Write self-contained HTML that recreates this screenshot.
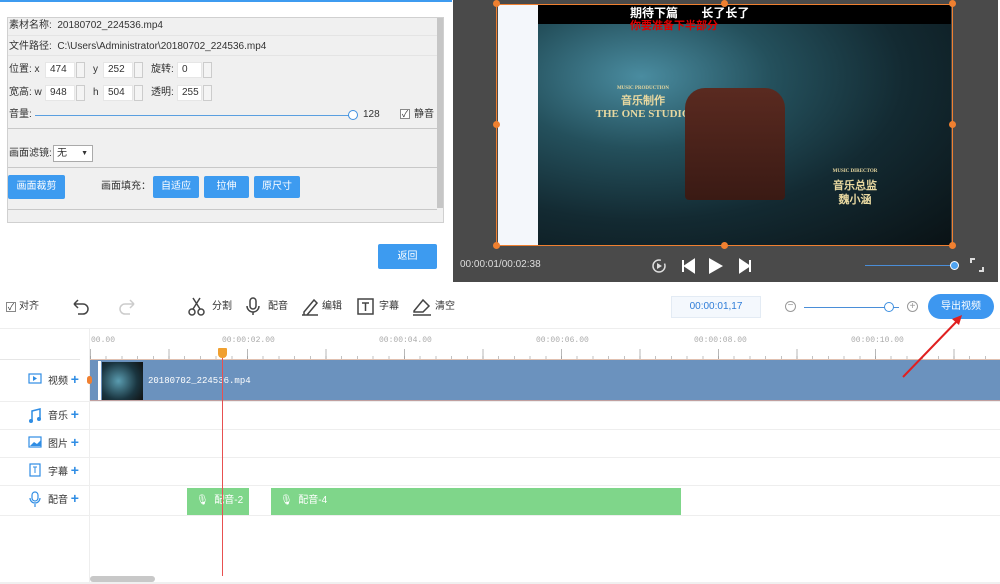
<!DOCTYPE html>
<html><head><meta charset="utf-8"><style>
*{margin:0;padding:0;box-sizing:border-box}
body{width:1000px;height:584px;position:relative;overflow:hidden;background:#fff;font-family:"Liberation Sans","Noto Sans CJK SC",sans-serif;font-size:10px;line-height:12px;color:#333}
.a{position:absolute}
.in{position:absolute;background:#fff;border:1px solid #e6e6e6;height:16px;font-size:10px;line-height:14px;padding-left:4px}
.sp{position:absolute;width:9px;height:16px;border:1px solid #ccc;background:#f4f4f4}
.btn{position:absolute;background:#3d9bf0;color:#fff;text-align:center;font-size:10px;border-radius:2px}
.lbl{position:absolute;font-size:10px;line-height:12px;color:#333}
.ruler{position:absolute;font-family:"Liberation Mono",monospace;font-size:8px;color:#aaa}
.trk{position:absolute;left:0;width:1000px;border-bottom:1px solid #eee}
.tl{position:absolute;left:48px;font-size:10px;line-height:14px;color:#333}
.plus{color:#2f8de4;font-size:14px;font-weight:bold}
</style></head><body>
<div class="a" style="left:0;top:0;width:452px;height:2px;background:#3d9bf0"></div>
<div class="a" style="left:7px;top:17px;width:437px;height:206px;background:#f0f0f0;border:1px solid #d0d0d0"></div>
<div class="a" style="left:437px;top:18px;width:6px;height:190px;background:#c6c6c6"></div>
<div class="a" style="left:8px;top:35px;width:429px;height:1px;background:#e4e4e4"></div>
<div class="a" style="left:8px;top:55px;width:429px;height:1px;background:#e4e4e4"></div>
<div class="lbl" style="left:9px;top:20px">素材名称:&nbsp; 20180702_224536.mp4</div>
<div class="lbl" style="left:9px;top:41px">文件路径:&nbsp; C:\Users\Administrator\20180702_224536.mp4</div>
<div class="lbl" style="left:9px;top:64px">位置: x</div>
<div class="in" style="left:45px;top:62px;width:30px">474</div><div class="sp" style="left:76px;top:62px"></div>
<div class="lbl" style="left:93px;top:64px">y</div>
<div class="in" style="left:103px;top:62px;width:30px">252</div><div class="sp" style="left:134px;top:62px"></div>
<div class="lbl" style="left:151px;top:64px">旋转:</div>
<div class="in" style="left:177px;top:62px;width:25px">0</div><div class="sp" style="left:203px;top:62px"></div>
<div class="lbl" style="left:9px;top:87px">宽高: w</div>
<div class="in" style="left:45px;top:85px;width:30px">948</div><div class="sp" style="left:76px;top:85px"></div>
<div class="lbl" style="left:93px;top:87px">h</div>
<div class="in" style="left:103px;top:85px;width:30px">504</div><div class="sp" style="left:134px;top:85px"></div>
<div class="lbl" style="left:151px;top:87px">透明:</div>
<div class="in" style="left:177px;top:85px;width:25px">255</div><div class="sp" style="left:203px;top:85px"></div>
<div class="lbl" style="left:9px;top:109px">音量:</div>
<div class="a" style="left:35px;top:115px;width:315px;height:1px;background:#5a9fe0"></div>
<div class="a" style="left:348px;top:110px;width:10px;height:10px;border:1.5px solid #3d8fe0;border-radius:50%;background:#fff"></div>
<div class="lbl" style="left:363px;top:109px">128</div>
<div class="a" style="left:400px;top:109px;width:10px;height:10px;border:1px solid #888;background:#fff;font-size:9px;line-height:8px;text-align:center;color:#333">✓</div>
<div class="lbl" style="left:414px;top:109px">静音</div>
<div class="a" style="left:8px;top:128px;width:429px;height:1px;background:#c8c8c8"></div>
<div class="lbl" style="left:9px;top:148px">画面滤镜:</div>
<div class="a" style="left:53px;top:145px;width:40px;height:17px;background:#fff;border:1px solid #aaa;font-size:10px;line-height:15px;padding-left:3px">无 <span style="position:absolute;right:4px;font-size:7px">▼</span></div>
<div class="a" style="left:8px;top:167px;width:429px;height:1px;background:#c8c8c8"></div>
<div class="btn" style="left:8px;top:175px;width:57px;height:24px;line-height:24px">画面裁剪</div>
<div class="lbl" style="left:101px;top:181px">画面填充：</div>
<div class="btn" style="left:153px;top:176px;width:46px;height:22px;line-height:22px">自适应</div>
<div class="btn" style="left:204px;top:176px;width:45px;height:22px;line-height:22px">拉伸</div>
<div class="btn" style="left:254px;top:176px;width:46px;height:22px;line-height:22px">原尺寸</div>
<div class="a" style="left:8px;top:209px;width:429px;height:1px;background:#c8c8c8"></div>
<div class="btn" style="left:378px;top:244px;width:59px;height:25px;line-height:25px">返回</div>
<!-- preview -->
<div class="a" style="left:453px;top:0;width:545px;height:282px;background:#4a4a4a"></div>
<div class="a" style="left:498px;top:4px;width:40px;height:242px;background:#f4f7fb"></div>
<div class="a" style="left:538px;top:4px;width:413px;height:242px;background:radial-gradient(ellipse at 25% 30%,#4a8ca0 0%,#24505c 30%,#132a32 60%,#0a1215 100%)"></div>
<div class="a" style="left:538px;top:4px;width:413px;height:20px;background:#000"></div>
<div class="a" style="left:630px;top:7px;color:#fff;font-weight:bold;font-size:12px">期待下篇 &nbsp; &nbsp; &nbsp; 长了长了</div>
<div class="a" style="left:630px;top:20px;color:#d00;font-weight:bold;font-size:11px">你要准备下半部分</div>
<div class="a" style="left:583px;top:80px;color:#e8d8a0;font-family:'Liberation Serif',serif;font-size:11px;font-weight:bold;text-align:center;width:120px;line-height:13px"><span style="font-size:5px">MUSIC PRODUCTION</span><br>音乐制作<br>THE ONE STUDIO</div>
<div class="a" style="left:685px;top:88px;width:100px;height:112px;background:linear-gradient(#5a2a20,#3a1a14);border-radius:20px 20px 4px 4px"></div>
<div class="a" style="left:810px;top:162px;color:#e8d8a0;font-family:'Liberation Serif',serif;font-size:11px;font-weight:bold;text-align:center;width:90px;line-height:14px"><span style="font-size:5px">MUSIC DIRECTOR</span><br>音乐总监<br>魏小涵</div>
<div class="a" style="left:496px;top:4px;width:457px;height:242px;border:1.5px solid #f08030"></div>
<div class="a" style="left:493px;top:0;width:7px;height:7px;border-radius:50%;background:#f08030"></div>
<div class="a" style="left:721px;top:0;width:7px;height:7px;border-radius:50%;background:#f08030"></div>
<div class="a" style="left:949px;top:0;width:7px;height:7px;border-radius:50%;background:#f08030"></div>
<div class="a" style="left:493px;top:121px;width:7px;height:7px;border-radius:50%;background:#f08030"></div>
<div class="a" style="left:949px;top:121px;width:7px;height:7px;border-radius:50%;background:#f08030"></div>
<div class="a" style="left:493px;top:242px;width:7px;height:7px;border-radius:50%;background:#f08030"></div>
<div class="a" style="left:721px;top:242px;width:7px;height:7px;border-radius:50%;background:#f08030"></div>
<div class="a" style="left:949px;top:242px;width:7px;height:7px;border-radius:50%;background:#f08030"></div>
<div class="a" style="left:460px;top:259px;color:#ddd;font-size:10px">00:00:01/00:02:38</div>
<svg class="a" style="left:650px;top:256px" width="110" height="20"><circle cx="9" cy="10" r="6" fill="none" stroke="#ddd" stroke-width="1.5" stroke-dasharray="30 5"/><path d="M7 7l5 3-5 3z" fill="#ddd"/><path d="M33 4v12M44 4l-9 6 9 6z" fill="#fff" stroke="#fff" stroke-width="2"/><path d="M59 2l14 8-14 8z" fill="#fff"/><path d="M90 4l9 6-9 6zM100 4v12" fill="#fff" stroke="#fff" stroke-width="2"/></svg>
<div class="a" style="left:865px;top:265px;width:90px;height:1px;background:#4a8ed8"></div>
<div class="a" style="left:950px;top:261px;width:9px;height:9px;border-radius:50%;background:#4fa3f0;border:1.5px solid #fff"></div>
<svg class="a" style="left:970px;top:258px" width="14" height="14"><path d="M1 5V1h4M13 9v4H9" fill="none" stroke="#ddd" stroke-width="2"/></svg>
<!-- toolbar -->
<div class="a" style="left:6px;top:302px;width:10px;height:10px;border:1px solid #888;font-size:9px;line-height:8px;text-align:center">✓</div>
<div class="lbl" style="left:19px;top:301px">对齐</div>
<svg class="a" style="left:70px;top:298px" width="80" height="18"><path d="M4 6h9a5 5 0 0 1 0 10H8M4 6l4-4M4 6l4 4" fill="none" stroke="#444" stroke-width="1.5"/><path d="M64 6h-9a5 5 0 0 0 0 10h5M64 6l-4-4M64 6l-4 4" fill="none" stroke="#ccc" stroke-width="1.5"/></svg>
<svg class="a" style="left:188px;top:297px" width="280" height="20"><g fill="none" stroke="#444" stroke-width="1.5"><circle cx="4" cy="15" r="3"/><circle cx="13" cy="15" r="3"/><path d="M5 12L12 1M12 12L5 1"/><rect x="62" y="1" width="6" height="11" rx="3"/><path d="M59 9a6 6 0 0 0 12 0M65 15v3"/><path d="M114 18h16M116 15l10-12 3 3-10 12h-3z"/><rect x="170" y="2" width="15" height="15"/><path d="M174 6h7M177.5 6v8"/><path d="M226 14l9-11 6 6-6 6h-9zM225 18h18"/></g></svg>
<div class="lbl" style="left:212px;top:301px">分割</div>
<div class="lbl" style="left:268px;top:301px">配音</div>
<div class="lbl" style="left:322px;top:301px">编辑</div>
<div class="lbl" style="left:379px;top:301px">字幕</div>
<div class="lbl" style="left:435px;top:301px">清空</div>
<div class="a" style="left:671px;top:296px;width:90px;height:22px;background:#f4f8fd;border:1px solid #e3ebf4;color:#2f7dd8;font-size:10px;text-align:center;line-height:20px">00:00:01,17</div>
<div class="a" style="left:785px;top:301px;width:11px;height:11px;border:1px solid #999;border-radius:50%;font-size:10px;line-height:8px;text-align:center;color:#999">−</div>
<div class="a" style="left:804px;top:307px;width:95px;height:1px;background:#4a8ed8"></div>
<div class="a" style="left:884px;top:302px;width:10px;height:10px;border:1.5px solid #3d8fe0;border-radius:50%;background:#fff"></div>
<div class="a" style="left:907px;top:301px;width:11px;height:11px;border:1px solid #999;border-radius:50%;font-size:10px;line-height:9px;text-align:center;color:#999">+</div>
<div class="a" style="left:928px;top:294px;width:66px;height:25px;border-radius:13px;background:#3d97f0;color:#fff;font-size:10px;text-align:center;line-height:25px">导出视频</div>
<!-- timeline -->
<div class="a" style="left:0;top:328px;width:1000px;height:1px;background:#eee"></div>
<div class="a" style="left:0;top:359px;width:80px;height:1px;background:#e6e6e6"></div>
<div class="a" style="left:89px;top:328px;width:1px;height:256px;background:#eee"></div>
<div class="ruler" style="left:91px;top:335px">00.00</div>
<div class="ruler" style="left:222px;top:335px">00:00:02.00</div>
<div class="ruler" style="left:379px;top:335px">00:00:04.00</div>
<div class="ruler" style="left:536px;top:335px">00:00:06.00</div>
<div class="ruler" style="left:694px;top:335px">00:00:08.00</div>
<div class="ruler" style="left:851px;top:335px">00:00:10.00</div>
<div class="a" style="left:90px;top:352px;width:910px;height:8px;background:repeating-linear-gradient(90deg,#999 0 1px,transparent 1px 15.7px);opacity:.6;clip-path:inset(4px 0 0 0)"></div>
<div class="a" style="left:90px;top:349px;width:910px;height:11px;background:repeating-linear-gradient(90deg,#999 0 1px,transparent 1px 78.5px);opacity:.7"></div>
<div class="a" style="left:90px;top:359px;width:910px;height:1px;background:#e0c0b0"></div>
<div class="trk" style="top:360px;height:42px"></div>
<div class="a" style="left:90px;top:360px;width:910px;height:41px;background:#6b92be;border-bottom:1px solid #c0a0a0"></div>
<div class="a" style="left:98px;top:361px;width:3px;height:39px;background:#fff"></div>
<div class="a" style="left:102px;top:362px;width:41px;height:38px;background:radial-gradient(circle at 40% 50%,#5a9cb0,#1a3540 60%,#111)"></div>
<div class="a" style="left:148px;top:375px;color:#fff;font-family:'Liberation Mono',monospace;font-size:9px">20180702_224536.mp4</div>
<div class="a" style="left:87px;top:376px;width:5px;height:8px;background:#f08030;border-radius:3px"></div>
<div class="trk" style="top:402px;height:28px"></div>
<div class="trk" style="top:430px;height:28px"></div>
<div class="trk" style="top:458px;height:28px"></div>
<div class="trk" style="top:486px;height:30px"></div>
<svg class="a" style="left:28px;top:373px" width="16" height="140"><rect x="1" y="1" width="12" height="9" fill="none" stroke="#2f8de4" stroke-width="1.2"/><path d="M5 3l4 2.5-4 2.5z" fill="#2f8de4"/><path d="M4 48V38l8-2v10" fill="none" stroke="#2f8de4" stroke-width="1.5"/><circle cx="3" cy="48" r="2" fill="#2f8de4"/><circle cx="11" cy="46" r="2" fill="#2f8de4"/><rect x="1" y="64" width="12" height="10" fill="none" stroke="#2f8de4" stroke-width="1.2"/><path d="M2 73l4-4 3 2 4-4v6z" fill="#2f8de4"/><rect x="2" y="91" width="10" height="12" fill="none" stroke="#2f8de4" stroke-width="1.2"/><path d="M5 94h4M7 94v6" stroke="#2f8de4"/><rect x="4" y="119" width="6" height="9" rx="3" fill="none" stroke="#2f8de4" stroke-width="1.2"/><path d="M2 125a5 5 0 0 0 10 0M7 131v3" fill="none" stroke="#2f8de4" stroke-width="1.2"/></svg>
<div class="tl" style="top:372px">视频 <span class="plus">+</span></div>
<div class="tl" style="top:407px">音乐 <span class="plus">+</span></div>
<div class="tl" style="top:435px">图片 <span class="plus">+</span></div>
<div class="tl" style="top:463px">字幕 <span class="plus">+</span></div>
<div class="tl" style="top:491px">配音 <span class="plus">+</span></div>
<div class="a" style="left:187px;top:488px;width:62px;height:27px;background:#7fd68a"></div>
<div class="a" style="left:271px;top:488px;width:410px;height:27px;background:#7fd68a"></div>
<div class="a" style="left:196px;top:495px;color:#fff;font-size:10px">🎙&nbsp; 配音-2</div>
<div class="a" style="left:280px;top:495px;color:#fff;font-size:10px">🎙&nbsp; 配音-4</div>
<div class="a" style="left:222px;top:356px;width:1px;height:220px;background:#e85050"></div>
<div class="a" style="left:218px;top:348px;width:9px;height:10px;background:#f0a030;border-radius:1px 1px 4px 4px"></div>
<div class="a" style="left:90px;top:576px;width:65px;height:6px;background:#c8c8c8;border-radius:3px"></div>
<div class="a" style="left:0;top:582px;width:1000px;height:2px;background:#f0f0f0"></div>
<svg class="a" style="left:0;top:0" width="1000" height="584" pointer-events="none"><path d="M903 377L960 318" stroke="#e02020" stroke-width="2"/><path d="M962 315l-10 4 7 6z" fill="#e02020"/></svg>
</body></html>
